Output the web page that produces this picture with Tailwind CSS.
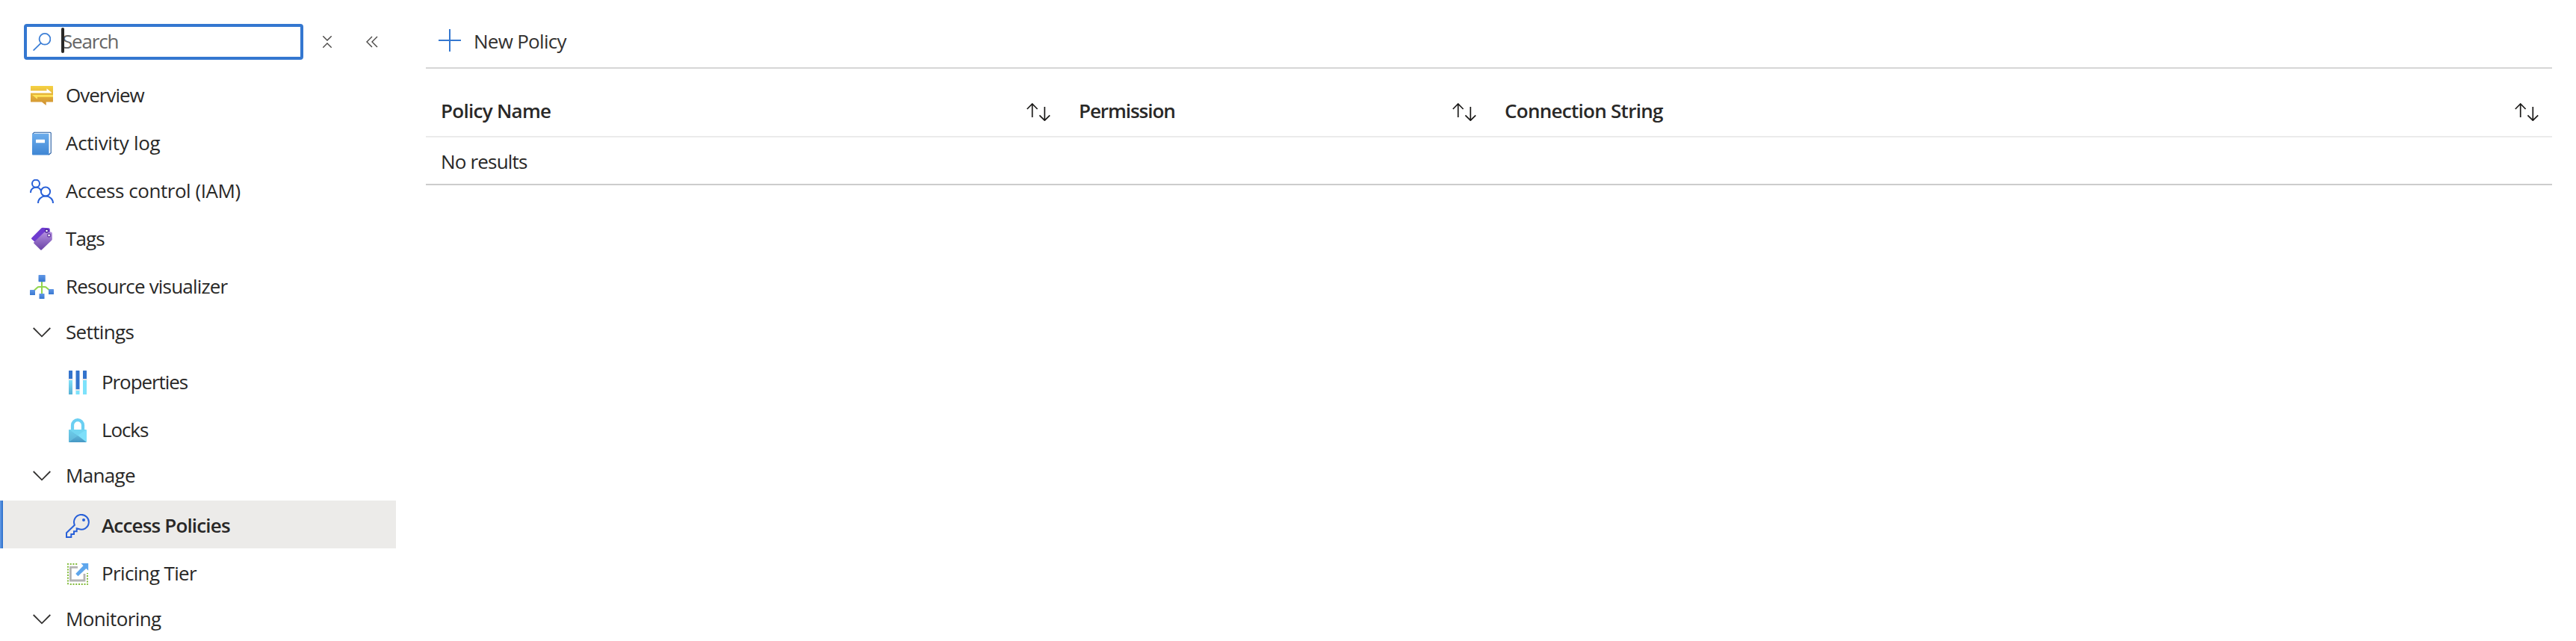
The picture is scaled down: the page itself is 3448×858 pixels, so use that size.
<!DOCTYPE html>
<html lang="en">
<head>
  <meta charset="UTF-8" />
  <meta name="viewport" content="width=device-width, initial-scale=1.0"/>
  <title>Access Policies</title>
  <script src="https://cdn.jsdelivr.net/npm/@tailwindcss/browser@4"></script>
</head>
<body class="h-[858px] overflow-hidden bg-white text-[#292827] text-[26px] font-['Open_Sans','Noto_Sans',sans-serif]">
  <div class="flex h-full overflow-hidden">

    <!-- Sidebar -->
    <aside class="w-[530px] shrink-0">

      <!-- Search -->
      <div class="flex items-center h-[94px] pt-[18px] pl-8">
        <div class="relative flex items-center w-[374px] h-12 border-4 border-[#3477d0] rounded-[4px] pl-2">
          <svg class="w-6 h-6 shrink-0" viewBox="0 0 24 24" fill="none" stroke="#3d7fd6" stroke-width="1.8">
            <circle cx="16" cy="8.3" r="7.4"/>
            <path d="M10.8 13.6L.6 23.6"/>
          </svg>
          <span class="ml-[15px] -mt-[2px] leading-9 text-[#666] tracking-[-1.18px]">Search</span>
          <span class="absolute left-[46px] top-[1px] w-[4px] h-[34px] rounded-sm bg-[#292827]"></span>
        </div>
        <svg class="w-3 h-4 ml-[26px]" viewBox="0 0 12 16" fill="none" stroke="#484644" stroke-width="1.4">
          <path d="M.3 .3L6 6L11.7 .3M.3 15.7L6 10L11.7 15.7"/>
        </svg>
        <svg class="w-4 h-4 ml-[46px]" viewBox="0 0 16 16" fill="none" stroke="#484644" stroke-width="1.4">
          <path d="M8 1L1 8L8 15M15 1L8 8L15 15"/>
        </svg>
      </div>

      <!-- Menu -->
      <nav>
        <a class="flex h-16 pl-10 leading-[66px]">
          <svg class="w-8 h-8 mt-[18px] mr-4 shrink-0" viewBox="0 0 32 32">
            <defs><linearGradient id="gold" x1="0" y1="0" x2="0" y2="1"><stop offset="0" stop-color="#f6d243"/><stop offset="1" stop-color="#cf8e30"/></linearGradient></defs>
            <path fill="url(#gold)" d="M1.5 3h29a.5.5 0 0 1 .5.5V24a.5.5 0 0 1-.5.5H21.7V29L16 24.5H1.5A.5.5 0 0 1 1 24V3.500a.5.5 0 0 1 .5-.5z"/>
            <path fill="#fff" d="M1 9.500h21.500V6.500l6.500 5.300v.8H1z"/>
            <path fill="#ffe35a" d="M31 15H3l7 5.800v-3H31z"/>
          </svg>
          <span class="tracking-[-1px]">Overview</span>
        </a>
        <a class="flex h-16 pl-10 leading-[66px]">
          <svg class="w-8 h-8 mt-[18px] mr-4 shrink-0" viewBox="0 0 32 32">
            <defs><linearGradient id="book" x1="0" y1="0" x2="0" y2="1"><stop offset="0" stop-color="#6cadec"/><stop offset="1" stop-color="#3f86d4"/></linearGradient></defs>
            <path fill="#fff" stroke="#1f58a0" stroke-width="1.100" d="M3.800 3.200L5.800 1.300H27.200a1 1 0 0 1 1 1V28.800L25.500 31z"/>
            <rect x="3" y="2.700" width="22.500" height="28.800" rx="1" fill="url(#book)"/>
            <rect x="8" y="10.800" width="12" height="4.400" rx=".5" fill="#fff"/>
          </svg>
          <span class="tracking-[-0.27px]">Activity log</span>
        </a>
        <a class="flex h-16 pl-10 leading-[66px]">
          <svg class="w-8 h-8 mt-[18px] mr-4 shrink-0" viewBox="0 0 32 32" fill="none" stroke="#2860d8" stroke-width="2">
            <circle cx="8" cy="5.700" r="5"/>
            <circle cx="21" cy="16.500" r="6.100"/>
            <path d="M1 18a7.200 7.200 0 0 1 13.600-3.300"/>
            <path d="M11 32a10 9.400 0 0 1 20 0"/>
          </svg>
          <span class="tracking-[-0.46px]">Access control (IAM)</span>
        </a>
        <a class="flex h-16 pl-10 leading-[66px]">
          <svg class="w-8 h-8 mt-[18px] mr-4 shrink-0" viewBox="0 0 32 32">
            <defs><linearGradient id="tag" x1="0" y1="0" x2="0" y2="1"><stop offset="0" stop-color="#b590e0"/><stop offset="1" stop-color="#6a43a6"/></linearGradient></defs>
            <path fill="#6f3bd0" d="M2.300 14.600L15.200 1.500Q16 .8 17 .8L25 1.200Q26.500 1.400 26.700 2.800L27 8L8 21L2.300 16Q1.600 15.300 2.300 14.600z"/>
            <path fill="url(#tag)" d="M5.400 20.300L19.300 6.800Q20 6.100 21 6.100L28.200 6.600Q29.700 6.800 29.800 8.200V16Q29.800 17 29.100 17.700L15.700 30.500Q15 31.100 14.300 30.500L5.400 21.700Q4.700 21 5.400 20.300z"/>
            <circle cx="22.500" cy="5" r="2" fill="#fff" stroke="#4b2596" stroke-width="1.300"/>
            <circle cx="25.600" cy="11" r="2" fill="#fff" stroke="#6a43a6" stroke-width="1.300"/>
          </svg>
          <span class="tracking-[-0.89px]">Tags</span>
        </a>
        <a class="flex h-16 pl-10 leading-[66px]">
          <svg class="w-8 h-8 mt-[18px] mr-4 shrink-0" viewBox="0 0 32 32">
            <defs><linearGradient id="node" x1="0" y1="0" x2="0" y2="1"><stop offset="0" stop-color="#6097e6"/><stop offset="1" stop-color="#3877d0"/></linearGradient></defs>
            <path fill="none" stroke="#92d64c" stroke-width="2" d="M16 8V26M5.500 21L9.500 17.200Q10.700 16 12.500 16H19.500Q21.300 16 22.500 17.200L26.500 20.800"/>
            <rect x="11.500" width="9.200" height="9.200" rx=".7" fill="url(#node)"/>
            <rect y="20" width="7" height="7" rx=".6" fill="url(#node)"/>
            <rect x="12.500" y="25" width="7" height="7" rx=".6" fill="url(#node)"/>
            <rect x="25" y="19" width="7" height="7" rx=".6" fill="url(#node)"/>
          </svg>
          <span class="tracking-[-0.82px]">Resource visualizer</span>
        </a>

        <!-- Settings -->
        <a class="flex h-16 pl-10 leading-[60px]">
          <svg class="w-8 h-8 mt-[18px] mr-4 shrink-0" viewBox="0 0 32 32" fill="none" stroke="#323130" stroke-width="1.800"><path d="M4.700 7L16 18.300L27.300 7"/></svg>
          <span class="tracking-[-0.65px]">Settings</span>
        </a>
        <a class="flex h-16 pl-[88px] leading-[66px]">
          <svg class="w-8 h-8 mt-[18px] mr-4 shrink-0" viewBox="0 0 32 32">
            <defs><linearGradient id="bar" x1="0" y1="0" x2="0" y2="1"><stop offset="0" stop-color="#7fe0f8"/><stop offset="1" stop-color="#57b0d4"/></linearGradient></defs>
            <path fill="#3373cc" d="M4 .5Q4 0 4.500 0H8.500Q9 0 9 .5V11H4zM13.500 .5Q13.500 0 14 0H18Q18.500 0 18.500 .5V25H13.500zM23 .5Q23 0 23.500 0H27.500Q28 0 28 .5V11H23z"/>
            <path fill="#e3e6ea" d="M3.500 11h6v2h-6zM13 25h6v2h-6zM22.500 11h6v2h-6z"/>
            <path fill="url(#bar)" d="M4 13H9V31.500Q9 32 8.500 32H4.500Q4 32 4 31.500z"/>
            <path fill="#7de2fb" d="M13.500 27H18.500V31.500Q18.500 32 18 32H14Q13.500 32 13.500 31.500zM23 13H28V31.500Q28 32 27.500 32H23.500Q23 32 23 31.500z"/>
          </svg>
          <span class="tracking-[-1.09px]">Properties</span>
        </a>
        <a class="flex h-16 pl-[88px] leading-[66px]">
          <svg class="w-8 h-8 mt-[18px] mr-4 shrink-0" viewBox="0 0 32 32">
            <defs>
              <linearGradient id="lockLeft" x1="0" y1="0" x2="0" y2="1"><stop offset="0" stop-color="#6ccdea"/><stop offset="1" stop-color="#5fb4d8"/></linearGradient>
              <linearGradient id="lockBase" x1="0" y1="0" x2="0" y2="1"><stop offset="0" stop-color="#62b8da"/><stop offset="1" stop-color="#4597c4"/></linearGradient>
            </defs>
            <path fill="none" stroke="#6bcff2" stroke-width="4.200" d="M9 16V9.200a7 7 0 0 1 14 0V16"/>
            <rect x="4" y="15" width="24" height="17" rx="1" fill="#7ddffa"/>
            <path fill="url(#lockLeft)" d="M5 15L16 22.800L5 32Q4 32 4 31V16Q4 15 5 15z"/>
            <path fill="#72d5f1" d="M4.500 15H27.500L16 22.800z"/>
            <path fill="url(#lockBase)" d="M4.500 31.700L16 22.800L27.500 31.700Q27.300 32 27 32H5Q4.700 32 4.500 31.700z"/>
          </svg>
          <span class="tracking-[-1.1px]">Locks</span>
        </a>

        <!-- Manage -->
        <a class="flex h-16 pl-10 leading-[60px]">
          <svg class="w-8 h-8 mt-[18px] mr-4 shrink-0" viewBox="0 0 32 32" fill="none" stroke="#323130" stroke-width="1.800"><path d="M4.700 7L16 18.300L27.300 7"/></svg>
          <span class="tracking-[-0.67px]">Manage</span>
        </a>
        <a class="flex h-16 bg-[#ecebe9] leading-[66px] font-semibold">
          <span class="w-1 h-full border-l-2 border-[#5b93e0] bg-[#3477d0]"></span>
          <svg class="w-8 h-8 mt-[18px] ml-[84px] mr-4 shrink-0" viewBox="0 0 32 32" fill="none" stroke="#2860d8" stroke-width="2">
            <path d="M11.900 14.800L1 25.300V31H7.300V27H11V23.200H14.700V19.300L17.300 20A9.900 9.900 0 1 0 11.900 14.800z"/>
            <circle cx="24" cy="8" r="2" fill="#2860d8" stroke="none"/>
          </svg>
          <span class="tracking-[-0.83px]">Access Policies</span>
        </a>
        <a class="flex h-16 pl-[88px] leading-[66px]">
          <svg class="w-8 h-8 mt-[18px] mr-4 shrink-0" viewBox="0 0 32 32">
            <path fill="none" stroke="#83bb3c" stroke-width="2" stroke-dasharray="2 1.750" d="M15.200 3H2M3 5.750V31M5.750 30H30M29 27.500V15"/>
            <path fill="none" stroke="#b3b3b3" stroke-width="2.800" d="M16 7.400H6.400V25H25V16"/>
            <path fill="#5ea6ec" d="M20.500 2H30.200V11.800L27.300 9L16.500 19.300L13.200 16L23.500 5.300z"/>
          </svg>
          <span class="tracking-[-0.65px]">Pricing Tier</span>
        </a>

        <!-- Monitoring -->
        <a class="flex h-16 pl-10 leading-[60px]">
          <svg class="w-8 h-8 mt-[18px] mr-4 shrink-0" viewBox="0 0 32 32" fill="none" stroke="#323130" stroke-width="1.800"><path d="M4.700 7L16 18.300L27.300 7"/></svg>
          <span class="tracking-[-0.62px]">Monitoring</span>
        </a>
      </nav>
    </aside>

    <!-- Main -->
    <main class="flex-1 ml-10 mr-8">

      <!-- Toolbar -->
      <div class="flex h-[92px] pl-[17px] border-b-2 border-[#d6d6d6] text-[#323130]">
        <svg class="w-[30px] h-[30px] mt-[39px] mr-[17px]" viewBox="0 0 30 30" fill="none" stroke="#3477d0" stroke-width="2"><path d="M15 0V30M0 15H30"/></svg>
        <span class="leading-[110px] tracking-[-0.72px]">New Policy</span>
      </div>

      <!-- Policy table -->
      <div class="grid grid-cols-[854px_570px_1fr] h-[92px] pt-[22px] border-b-2 border-[#ebebeb] font-semibold leading-[68px]">
        <div class="flex justify-between pl-5 pr-[18px]">
          <span class="tracking-[-0.72px]">Policy Name</span>
          <svg class="w-8 h-6 mt-6" viewBox="0 0 32 24" fill="none" stroke="#1b1a19" stroke-width="1.700"><path d="M7.700 19V1M.8 8L7.700 1L14.600 8M24.300 5V23.300M17.400 16.300L24.300 23.200L31.200 16.300"/></svg>
        </div>
        <div class="flex justify-between pl-5 pr-[18px]">
          <span class="tracking-[-1.05px]">Permission</span>
          <svg class="w-8 h-6 mt-6" viewBox="0 0 32 24" fill="none" stroke="#1b1a19" stroke-width="1.700"><path d="M7.700 19V1M.8 8L7.700 1L14.600 8M24.300 5V23.300M17.400 16.300L24.300 23.200L31.200 16.300"/></svg>
        </div>
        <div class="flex justify-between pl-5 pr-[18px]">
          <span class="tracking-[-0.72px]">Connection String</span>
          <svg class="w-8 h-6 mt-6" viewBox="0 0 32 24" fill="none" stroke="#1b1a19" stroke-width="1.700"><path d="M7.700 19V1M.8 8L7.700 1L14.600 8M24.300 5V23.300M17.400 16.300L24.300 23.200L31.200 16.300"/></svg>
        </div>
      </div>
      <div class="h-16 pl-5 border-b-2 border-[#ccc] leading-[64px] tracking-[-0.82px]">No results</div>
    </main>

  </div>
</body>
</html>
